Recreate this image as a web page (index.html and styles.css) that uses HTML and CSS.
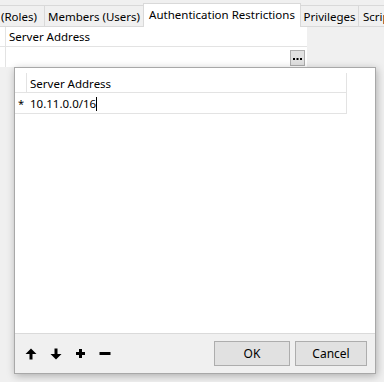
FILE: index.html
```html
<!DOCTYPE html>
<html lang="en">
<head>
    <meta charset="UTF-8">
    <title>Authentication Restrictions</title>
    <link rel="stylesheet" href="styles.css">
</head>
<body>

    <div class="tabs">
        <div class="tab tab-roles">(Roles)</div>
        <div class="tab tab-members">Members (Users)</div>
        <div class="tab tab-auth active">Authentication Restrictions</div>
        <div class="tab tab-priv">Privileges</div>
        <div class="tab tab-scripts">Scripts</div>
    </div>

    <div class="panel">
        <div class="prow phead">
            <div class="pmark"></div>
            <div class="pcell">Server Address</div>
        </div>
        <div class="prow">
            <div class="pmark"></div>
            <div class="pcell pedit">
                <span class="ellipsis">
                    <svg width="9" height="3" viewBox="0 0 9 3">
                        <rect x="0" y="0" width="2" height="2" fill="#000"/>
                        <rect x="3.5" y="0" width="2" height="2" fill="#000"/>
                        <rect x="7" y="0" width="2" height="2" fill="#000"/>
                    </svg>
                </span>
            </div>
        </div>
    </div>

    <div class="dialog">
        <div class="editor">
            <div class="grow ghead">
                <div class="gmark"></div>
                <div class="gcell">Server Address</div>
            </div>
            <div class="grow">
                <div class="gmark">*</div>
                <div class="gcell">10.11.0.0/16<span class="caret"></span></div>
            </div>
        </div>

        <div class="footer">
            <div class="tools">
                <!-- up -->
                <svg width="12" height="12" viewBox="0 0 12 12">
                    <path d="M6 0.5 L11.5 6 L7.5 6 L7.5 11.5 L4.5 11.5 L4.5 6 L0.5 6 Z" fill="#000"/>
                </svg>
                <!-- down -->
                <svg width="12" height="12" viewBox="0 0 12 12">
                    <path d="M6 11.5 L11.5 6 L7.5 6 L7.5 0.5 L4.5 0.5 L4.5 6 L0.5 6 Z" fill="#000"/>
                </svg>
                <!-- add -->
                <svg width="11" height="11" viewBox="0 0 11 11">
                    <path d="M4 1 H7 V4 H10 V7 H7 V10 H4 V7 H1 V4 H4 Z" fill="#000"/>
                </svg>
                <!-- remove -->
                <svg width="12" height="11" viewBox="0 0 12 11">
                    <rect x="0.5" y="4" width="11" height="3" fill="#000"/>
                </svg>
            </div>
            <div class="buttons">
                <button class="btn btn-ok">OK</button>
                <button class="btn btn-cancel">Cancel</button>
            </div>
        </div>
    </div>

</body>
</html>
```

FILE: styles.css
```css
body {
    margin: 0;
    width: 384px;
    height: 382px;
    overflow: hidden;
    background: #f0f0f0;
    font-family: "Segoe UI", "Noto Sans", sans-serif;
    font-size: 11.5px;
    color: #000;
    position: relative;
}

/* tab strip */
.tabs {
    display: flex;
    align-items: flex-end;
    height: 27px;
    overflow: hidden;
    white-space: nowrap;
}

.tab {
    box-sizing: border-box;
    flex: none;
    height: 22px;
    border: 1px solid #d9d9d9;
    border-left: none;
    background: #f0f0f0;
    text-align: center;
    line-height: 21px;
}

.tab.active {
    height: 24px;
    background: #fff;
    border-left: 1px solid #d9d9d9;
    border-bottom: none;
    line-height: 21px;
    margin-left: -1px;
}

.tab-roles { width: 45px; text-align: left; padding-left: 1px; }
.tab-members { width: 99px; }
.tab-auth { width: 158px; }
.tab-priv { width: 58px; }
.tab-scripts { width: 26px; text-align: left; padding-left: 4px; overflow: hidden; border-right: none; }

/* property grid */
.panel {
    width: 307px;
    background: #fff;
}

.prow {
    display: flex;
    height: 20px;
}

.phead {
    height: 19px;
    border-bottom: 1px solid #e3e3e3;
}

.pmark {
    width: 5px;
    border-right: 1px solid #e3e3e3;
}

.pcell {
    flex: 1;
    padding-left: 3px;
    line-height: 19px;
}

.pedit {
    display: flex;
    justify-content: flex-end;
    align-items: flex-end;
    padding-right: 2px;
}

.ellipsis {
    box-sizing: border-box;
    width: 15px;
    height: 16px;
    margin-bottom: 1px;
    background: #e1e1e1;
    border: 1px solid #adadad;
    display: flex;
    align-items: center;
    justify-content: center;
    padding-top: 2px;
}

.ellipsis svg {
    display: block;
}

/* popup editor */
.dialog {
    position: absolute;
    left: 14px;
    top: 67px;
    width: 362px;
    height: 307px;
    box-sizing: border-box;
    border: 1px solid #a8a8a8;
    background: #fff;
    box-shadow: 1px 2px 8px rgba(0, 0, 0, 0.28);
    display: flex;
    flex-direction: column;
}

.editor {
    flex: 1;
    padding-top: 5px;
}

.grow {
    display: flex;
    height: 20px;
    border-bottom: 1px solid #e3e3e3;
    width: 332px;
}

.ghead {
    height: 19px;
}

.gmark {
    width: 11px;
    border-right: 1px solid #e3e3e3;
    text-align: center;
    font-size: 11px;
    line-height: 22px;
}

.grow:not(.ghead) .gmark {
    border-right: none;
    width: 12px;
}

.gcell {
    flex: 1;
    padding-left: 3px;
    line-height: 21px;
    border-right: 1px solid #e3e3e3;
}

.caret {
    display: inline-block;
    width: 1px;
    height: 14px;
    background: #000;
    vertical-align: -3px;
}

.footer {
    height: 39px;
    border-top: 1px solid #dadada;
    background: #f0f0f0;
    display: flex;
    align-items: center;
    justify-content: space-between;
    padding: 0 8px 0 10px;
}

.tools {
    display: flex;
    gap: 13px;
    align-items: center;
}

.tools svg {
    display: block;
}

.buttons {
    display: flex;
    gap: 5px;
}

.btn {
    box-sizing: border-box;
    height: 25px;
    background: #e1e1e1;
    border: 1px solid #adadad;
    font-family: inherit;
    font-size: 12px;
    padding: 0;
    color: #000;
}

.btn-ok { width: 76px; }
.btn-cancel { width: 72px; }
```
